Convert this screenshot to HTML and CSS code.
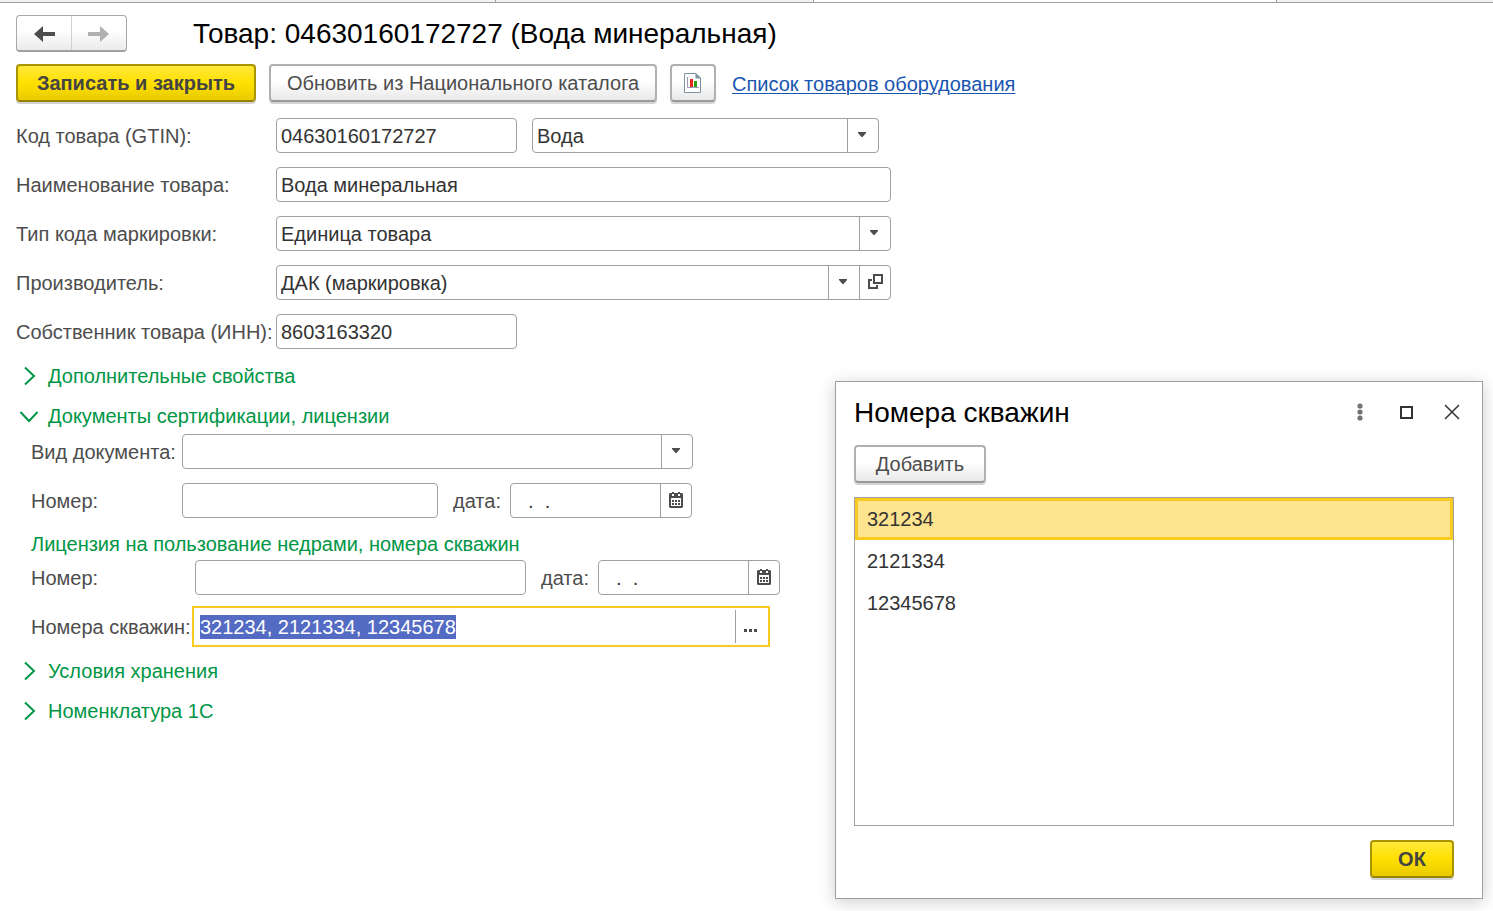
FILE: index.html
```html
<!DOCTYPE html>
<html lang="ru">
<head>
<meta charset="utf-8">
<meta name="viewport" content="width=device-width, initial-scale=1">
<title>Товар: 04630160172727 (Вода минеральная)</title>
<link rel="stylesheet" href="styles.css">
</head>
<body>
<svg class="defs" width="0" height="0" aria-hidden="true">
  <symbol id="i-down" viewBox="0 0 8 5"><path d="M0 0h8v1L4.500 5h-1L0 1z" fill="#4d4d4d"/></symbol>
  <symbol id="i-right" viewBox="0 0 20 20"><path d="M6 1.500l9 8.500-9 8.500" fill="none" stroke="#009646" stroke-width="2"/></symbol>
  <symbol id="i-open" viewBox="0 0 20 20"><path d="M1.500 6l8.500 9 8.500-9" fill="none" stroke="#009646" stroke-width="2"/></symbol>
  <symbol id="i-cal" viewBox="0 0 14 16"><path fill="#4d4d4d" fill-rule="evenodd" d="M1 1h2V0h2v1h4V0h2v1h2l1 1v13l-1 1H1l-1-1V2zM2 6v8h10V6zM3 2v2h2V2zM9 2v2h2V2z"/><path fill="#4d4d4d" d="M3 8h2v2H3zM6 8h2v2H6zM9 8h2v2H9zM3 11h2v2H3zM6 11h2v2H6zM9 11h2v2H9z"/></symbol>
</svg>

<div class="tabs"><span class="tab tab-a"></span><span class="tab tab-b"></span><span class="tab tab-c"></span><span class="tab tab-d"></span></div>

<main class="page">
  <header class="head">
    <div class="nav">
      <button type="button" aria-label="Назад"><svg width="22" height="16" viewBox="0 0 22 16"><path d="M1 8L10 0v6h12v4H10v6z" fill="#4d4d4d"/></svg></button>
      <button type="button" aria-label="Вперед"><svg width="22" height="16" viewBox="0 0 22 16"><path d="M21 8L12 0v6H0v4h12v6z" fill="#b0b0b0"/></svg></button>
    </div>
    <h1>Товар: 04630160172727 (Вода минеральная)</h1>
  </header>

  <div class="toolbar">
    <button type="button" class="btn primary save">Записать и закрыть</button>
    <button type="button" class="btn update">Обновить из Национального каталога</button>
    <button type="button" class="btn report" aria-label="Отчет"><svg width="18" height="20" viewBox="0 0 18 20"><path d="M.500.500h11.500l4.500 4.500v14.500H.500z" fill="#fff" stroke="#7f929e"/><path d="M11.500 0L17 5.500h-5.500z" fill="#7f929e"/><path d="M3.500 4v10.500H15" fill="none" stroke="#9a9ab8"/><path d="M6 6h3v8H6z" fill="#e8271b"/><path d="M10 8h3v6h-3z" fill="#2f9b12"/></svg></button>
    <a class="link" href="#">Список товаров оборудования</a>
  </div>

  <form class="form">
    <div class="rows">
      <div class="row">
        <label class="lab" for="gtin">Код товара (GTIN):</label>
        <input class="field short" id="gtin" value="04630160172727">
        <div class="combo kind">
          <select aria-label="Вид товара"><option>Вода</option></select>
          <span class="arrow"><svg width="8" height="5"><use href="#i-down"/></svg></span>
        </div>
      </div>
      <div class="row">
        <label class="lab" for="name">Наименование товара:</label>
        <input class="field long" id="name" value="Вода минеральная">
      </div>
      <div class="row">
        <label class="lab" for="mark">Тип кода маркировки:</label>
        <div class="combo long">
          <select id="mark"><option>Единица товара</option></select>
          <span class="arrow"><svg width="8" height="5"><use href="#i-down"/></svg></span>
        </div>
      </div>
      <div class="row">
        <label class="lab" for="maker">Производитель:</label>
        <div class="combo long with-open">
          <select id="maker"><option>ДАК (маркировка)</option></select>
          <span class="arrow"><svg width="8" height="5"><use href="#i-down"/></svg></span>
          <button type="button" class="cell" aria-label="Открыть"><svg width="15" height="15" viewBox="0 0 15 15"><path d="M6 1h8v8H6zM4 6H1v8h8v-3" fill="none" stroke="#4d4d4d" stroke-width="2"/></svg></button>
        </div>
      </div>
      <div class="row">
        <label class="lab" for="inn">Собственник товара (ИНН):</label>
        <input class="field short" id="inn" value="8603163320">
      </div>
    </div>

    <div class="groups">
      <button type="button" class="group" aria-expanded="false"><svg width="20" height="20"><use href="#i-right"/></svg>Дополнительные свойства</button>
      <button type="button" class="group" aria-expanded="true"><svg width="20" height="20"><use href="#i-open"/></svg>Документы сертификации, лицензии</button>
    </div>

    <div class="sub">
      <div class="rows">
        <div class="row">
          <label class="lab doc" for="doc">Вид документа:</label>
          <div class="combo doctype">
            <select id="doc"><option></option></select>
            <span class="arrow"><svg width="8" height="5"><use href="#i-down"/></svg></span>
          </div>
        </div>
        <div class="row">
          <label class="lab doc" for="num1">Номер:</label>
          <input class="field num1" id="num1">
          <label class="date-lab" for="date1">дата:</label>
          <div class="date">
            <input id="date1" value="  .  .">
            <button type="button" class="cell" aria-label="Выбрать дату"><svg width="14" height="16"><use href="#i-cal"/></svg></button>
          </div>
        </div>
      </div>
      <h2>Лицензия на пользование недрами, номера скважин</h2>
      <div class="row">
        <label class="lab lic" for="num2">Номер:</label>
        <input class="field num2" id="num2">
        <label class="date-lab" for="date2">дата:</label>
        <div class="date">
          <input id="date2" value="  .  .">
          <button type="button" class="cell" aria-label="Выбрать дату"><svg width="14" height="16"><use href="#i-cal"/></svg></button>
        </div>
      </div>
      <div class="row wells-row">
        <label class="lab well" for="wells">Номера скважин:</label>
        <div class="wells">
          <input id="wells" value="321234, 2121334, 12345678">
          <button type="button" class="cell" aria-label="Выбрать"><svg width="14" height="3" viewBox="0 0 14 3"><path d="M0 0h3v3H0zM5 0h3v3H5zM10 0h3v3h-3z" fill="#4d4d4d"/></svg></button>
        </div>
      </div>
    </div>

    <div class="groups last">
      <button type="button" class="group" aria-expanded="false"><svg width="20" height="20"><use href="#i-right"/></svg>Условия хранения</button>
      <button type="button" class="group" aria-expanded="false"><svg width="20" height="20"><use href="#i-right"/></svg>Номенклатура 1С</button>
    </div>
  </form>
</main>

<section class="dialog" role="dialog" aria-labelledby="dlg">
  <header class="dialog-head">
    <h1 id="dlg">Номера скважин</h1>
    <div class="tools">
      <button type="button" aria-label="Еще"><svg width="6" height="18" viewBox="0 0 6 18"><g fill="#737373"><circle cx="3" cy="3" r="2.600"/><circle cx="3" cy="9" r="2.600"/><circle cx="3" cy="15" r="2.600"/></g></svg></button>
      <button type="button" aria-label="Развернуть"><svg width="13" height="13" viewBox="0 0 13 13"><path d="M1 1h11v11H1z" fill="none" stroke="#333" stroke-width="2"/></svg></button>
      <button type="button" aria-label="Закрыть"><svg width="16" height="16" viewBox="0 0 16 16"><path d="M1 1l14 14M15 1L1 15" fill="none" stroke="#333" stroke-width="1.500"/></svg></button>
    </div>
  </header>
  <button type="button" class="btn add">Добавить</button>
  <ul class="list">
    <li class="active">321234</li>
    <li>2121334</li>
    <li>12345678</li>
  </ul>
  <button type="button" class="btn primary ok">ОК</button>
</section>
<script src="script.js"></script>
</body>
</html>
```

FILE: styles.css
```css
* { box-sizing: border-box; }
body {
  margin: 0;
  min-height: 100vh;
  position: relative;
  background: #fff;
  color: #4d4d4d;
  font: 20px/24px "Liberation Sans", Arial, sans-serif;
}
button, input, select { font: inherit; color: inherit; margin: 0; }
button { padding: 0; border: 0; background: none; cursor: pointer; }
input, select { color: #333; outline: 0; min-width: 0; }
h1, h2 { margin: 0; font-weight: 400; }
h1 { font-size: 28px; line-height: 36px; color: #000; }
h2 { font-size: 20px; line-height: 24px; color: #009646; }
svg { display: block; flex: none; }
.defs { position: absolute; }

.tabs { display: flex; height: 3px; border-bottom: 1px solid #a0a0a0; }
.tab { background: #f2f2f2; border-right: 1px solid #a0a0a0; }
.tab-a { flex: 496; }
.tab-b { flex: 318; }
.tab-c { flex: 463; background: #fff; }
.tab-d { flex: 216; border-right: 0; }

.page { padding: 12px 16px; }
.head { display: flex; align-items: center; gap: 66px; }
.nav {
  display: flex;
  width: 111px;
  height: 37px;
  border: 1px solid #a8a8a8;
  border-bottom: 2px solid #a0a0a0;
  border-radius: 4px;
  background: linear-gradient(#fff 40%, #ebebeb);
}
.nav button { flex: 1; display: flex; align-items: center; justify-content: center; padding-top: 2px; }
.nav button + button { border-left: 1px solid #d0d0d0; }

.toolbar { display: flex; align-items: center; gap: 13px; margin-top: 12px; }
.btn {
  height: 38px;
  border: 2px solid #b0b0b0;
  border-bottom-color: #999;
  border-radius: 4px;
  background: linear-gradient(#fff 45%, #e8e8e8);
  box-shadow: 0 2px 0 #d4d4d4;
  color: #4d4d4d;
}
.primary {
  border-color: #a89400;
  border-bottom-color: #968400;
  background: linear-gradient(#ffe83b, #ffe000 50%, #e9cb00);
  font-weight: 700;
  color: #444;
}
.save { width: 240px; }
.update { width: 388px; }
.report { width: 46px; display: flex; align-items: center; justify-content: center; }
.link { margin-left: 3px; padding-top: 2px; color: #1a55b0; text-underline-offset: 2px; text-decoration-thickness: 1px; }

.form { margin-top: 16px; }
.rows { display: grid; gap: 14px; }
.row { display: flex; align-items: center; }
.lab { flex: none; width: 260px; white-space: nowrap; }
.doc { width: 151px; }
.lic { width: 164px; }
.well { width: 161px; }
.field, .combo, .date {
  height: 35px;
  border: 1px solid #a0a0a0;
  border-radius: 4px;
  background: #fff;
}
.field { padding: 1px 4px 0; }
.short { width: 241px; }
.long { width: 615px; }
.kind { width: 347px; margin-left: 15px; }
.doctype { width: 511px; }
.num1 { width: 256px; }
.num2 { width: 331px; }
.combo { display: grid; grid-template-columns: 1fr 31px; }
.with-open { grid-template-columns: 1fr 31px 31px; }
.combo select {
  grid-area: 1 / 1 / 2 / 3;
  appearance: none;
  border: 0;
  padding: 0 35px 0 4px;
  background: none;
}
.arrow, .cell {
  display: flex;
  align-items: center;
  justify-content: center;
  border-left: 1px solid #a0a0a0;
}
.arrow { grid-area: 1 / 2; pointer-events: none; padding: 0 2px 2px 0; }
.cell { width: 31px; padding-bottom: 2px; }
.date-lab { width: 57px; margin-left: 15px; }
.date { display: flex; width: 182px; }
.date input, .wells input { flex: 1; border: 0; padding: 0 6px; background: none; }

.groups { display: grid; justify-items: start; gap: 16px; margin-top: 15px; padding-left: 3px; }
.groups.last { margin-top: 12px; }
.group { display: flex; align-items: center; gap: 9px; height: 24px; color: #009646; }
.sub { margin-top: 6px; padding-left: 15px; }
.sub h2 { margin: 14px 0 4px; }
.wells-row { margin-top: 11px; }
.wells { display: flex; width: 578px; height: 41px; padding: 2px; border: 2px solid #f9cb20; }
.wells input { padding: 0 4px; }
.wells input::selection { background: #546bc3; color: #fff; }
.wells .cell { padding: 8px 1px 0 0; }

.dialog {
  position: absolute;
  top: 381px;
  right: 10px;
  width: 648px;
  display: flex;
  flex-direction: column;
  align-items: flex-start;
  padding: 13px 28px 20px 18px;
  border: 1px solid #a0a0a0;
  background: #fff;
  box-shadow: 0 3px 16px rgba(0, 0, 0, .2);
}
.dialog-head { align-self: stretch; display: flex; justify-content: space-between; align-items: center; }
.tools { display: flex; align-items: center; gap: 22px; margin-right: -10px; padding-bottom: 2px; }
.tools button { width: 24px; height: 24px; display: flex; align-items: center; justify-content: center; }
.add { width: 132px; margin-top: 14px; }
.list {
  align-self: stretch;
  height: 329px;
  margin: 14px 0;
  padding: 0;
  list-style: none;
  border: 1px solid #a0a0a0;
  color: #333;
}
.list li { height: 42px; padding: 0 12px; line-height: 42px; }
.list .active { padding: 0 9px; line-height: 36px; border: 3px solid #f9cb20; background: #fee48f; }
.ok { width: 84px; align-self: flex-end; }
```

FILE: script.js
```js
const wells = document.getElementById("wells");
wells.focus();
wells.select();
```
